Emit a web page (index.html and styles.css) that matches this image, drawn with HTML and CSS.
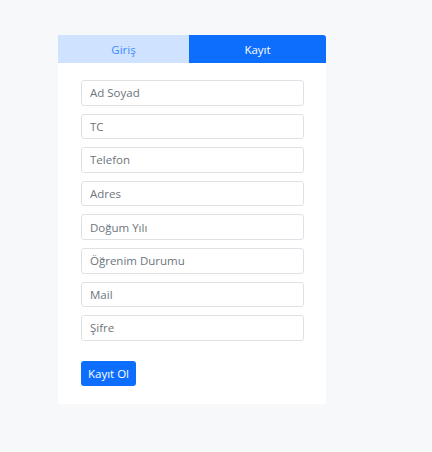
FILE: index.html
```html
<!DOCTYPE html>
<html lang="tr">
<head>
<meta charset="utf-8">
<link rel="stylesheet" href="styles.css">
</head>
<body>
<div class="card">
  <div class="tabs">
    <div class="tab tab-login">Giriş</div>
    <div class="tab tab-register">Kayıt</div>
  </div>
  <form class="form">
    <input class="field" type="text" placeholder="Ad Soyad">
    <input class="field" type="text" placeholder="TC">
    <input class="field" type="text" placeholder="Telefon">
    <input class="field" type="text" placeholder="Adres">
    <input class="field" type="text" placeholder="Doğum Yılı">
    <input class="field" type="text" placeholder="Öğrenim Durumu">
    <input class="field" type="text" placeholder="Mail">
    <input class="field" type="password" placeholder="Şifre">
    <button class="btn" type="button">Kayıt Ol</button>
  </form>
</div>
</body>
</html>
```
FILE: styles.css
```css
html, body {
  margin: 0;
  padding: 0;
  background: #f7f8fa;
  font-family: "Open Sans", "Noto Sans", sans-serif;
}
body {
  padding: 35px 0 0 58px;
}
.card {
  width: 268px;
  background: #ffffff;
  display: flex;
  flex-direction: column;
}
.tabs {
  display: flex;
  height: 28px;
}
.tab {
  display: flex;
  align-items: center;
  justify-content: center;
  font-size: 11.5px;
}
.tab-login {
  width: 131px;
  background: #cfe2ff;
  color: #3d8bfd;
}
.tab-register {
  flex: 1;
  background: #0d6efd;
  color: #ffffff;
  border-top-right-radius: 3px;
}
.form {
  display: flex;
  flex-direction: column;
  align-items: flex-start;
  padding: 17px 22px 18px 23px;
  gap: 8px;
}
.field {
  box-sizing: border-box;
  width: 223px;
  height: 25.6px;
  margin: 0;
  padding: 0 8px;
  border: 1px solid #dee2e6;
  border-radius: 3px;
  font-family: inherit;
  font-size: 11.5px;
  color: #212529;
  background: #fff;
  outline: none;
}
.field::placeholder {
  color: #6c757d;
}
.btn {
  margin-top: 12px;
  box-sizing: border-box;
  width: 55px;
  height: 25px;
  padding: 0;
  border: none;
  border-radius: 3px;
  background: #0d6efd;
  color: #fff;
  font-family: inherit;
  font-size: 11.5px;
}
```
